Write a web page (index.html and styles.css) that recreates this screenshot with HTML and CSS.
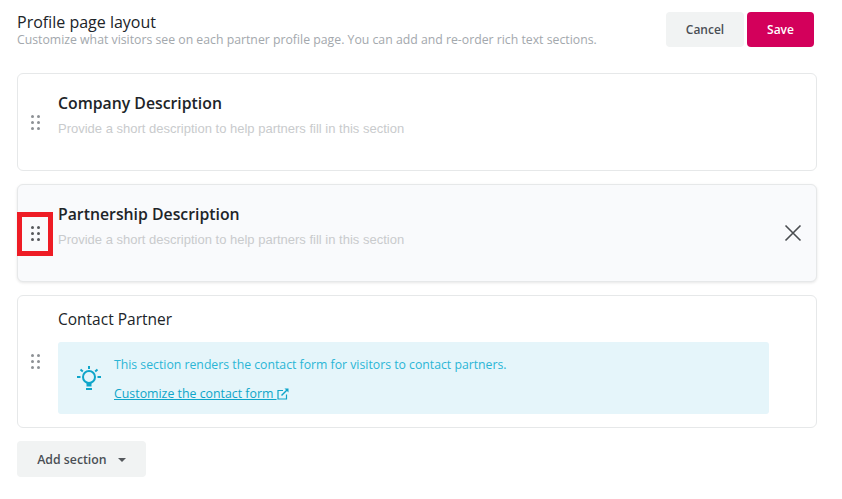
FILE: index.html
```html
<!DOCTYPE html>
<html lang="en">
<head>
  <meta charset="UTF-8">
  <title>Profile page layout</title>
  <link rel="stylesheet" href="styles.css">
</head>
<body>

<div class="page">
  <div class="page-header">
    <div class="page-title">
      <h1>Profile page layout</h1>
      <p>Customize what visitors see on each partner profile page. You can add and re-order rich text sections.</p>
    </div>
    <div class="actions">
      <button type="button" class="btn btn-cancel">Cancel</button>
      <button type="button" class="btn btn-save">Save</button>
    </div>
  </div>

  <div class="section">
    <span class="handle"><i></i><i></i><i></i><i></i><i></i><i></i></span>
    <div class="section-body">
      <h2>Company Description</h2>
      <p class="hint">Provide a short description to help partners fill in this section</p>
    </div>
  </div>

  <div class="section section-active">
    <span class="handle"><i></i><i></i><i></i><i></i><i></i><i></i></span>
    <div class="section-body">
      <h2>Partnership Description</h2>
      <p class="hint">Provide a short description to help partners fill in this section</p>
    </div>
    <svg class="close" width="18" height="18" viewBox="0 0 18 18"><path d="M1.5 1.5l15 15M16.5 1.5l-15 15" fill="none" stroke="#4a4d50" stroke-width="1.6"/></svg>
    <div class="highlight"></div>
  </div>

  <div class="section section-contact">
    <span class="handle"><i></i><i></i><i></i><i></i><i></i><i></i></span>
    <div class="section-body">
      <h3>Contact Partner</h3>
      <div class="notice">
        <svg class="bulb" width="26" height="26" viewBox="0 0 26 26" fill="none" stroke="#0ea5c9" stroke-width="2">
          <circle cx="13" cy="12" r="6"/>
          <path d="M10.500 18.500h5M10.500 20.500h5M10 24h6M13 1v3M1 12h3.500M21.500 12h3.500M4.500 4.500l2.300 2M21.500 4.500l-2.300 2"/>
        </svg>
        <div class="notice-text">
          <p>This section renders the contact form for visitors to contact partners.</p>
          <a href="#">Customize the contact form
            <svg width="12" height="12" viewBox="0 0 12 12" fill="none" stroke="#0ea5c9" stroke-width="1.2"><path d="M6 2.500H1v8.500h8.500V6.500"/><path d="M4.500 7.500L10 2" stroke-width="1.500"/><path d="M7.500 .5H11.500V4.500z" fill="#0ea5c9" stroke="none"/></svg>
          </a>
        </div>
      </div>
    </div>
  </div>

  <button type="button" class="btn btn-add">Add section <span class="caret"></span></button>
</div>

</body>
</html>
```

FILE: styles.css
```css
body {
    margin: 0;
    background-color: #fff;
    font-family: "Open Sans", "Noto Sans", Arial, sans-serif;
    color: #202428;
}

.page {
    width: 800px;
    padding: 12px 0 0 17px;
}

.page-header {
    display: flex;
    justify-content: space-between;
    height: 61px;
    padding-right: 3px;
}

h1 {
    margin: 0;
    font-size: 16px;
    font-weight: 400;
    line-height: 20px;
}

.page-title p {
    margin: 0;
    font-size: 12.280px;
    line-height: 16px;
    color: #a3a8ad;
}

.actions {
    display: flex;
    gap: 3px;
}

.btn {
    height: 35px;
    border: none;
    border-radius: 4px;
    font-family: inherit;
    font-size: 12px;
    font-weight: 600;
    cursor: pointer;
}

.btn-cancel {
    width: 78px;
    background-color: #f1f3f3;
    color: #4a4f55;
}

.btn-save {
    width: 67px;
    background-color: #d3005b;
    color: #fff;
}

.section {
    position: relative;
    display: flex;
    align-items: center;
    box-sizing: border-box;
    height: 98px;
    margin-bottom: 13px;
    border: 1px solid #e6e8e9;
    border-radius: 6px;
    background-color: #fff;
}

.section-active {
    background-color: #f9fafc;
    box-shadow: 0 1px 3px rgba(0, 0, 0, 0.1);
}

.section-contact {
    height: 133px;
}

.handle {
    display: grid;
    grid-template-columns: 3px 3px;
    gap: 3px;
    flex: none;
    width: 9px;
    margin-left: 13px;
}

.handle i {
    width: 3px;
    height: 3px;
    border-radius: 50%;
    background-color: #8d9195;
}

.section-active .handle i {
    background-color: #55585c;
}

.section-body {
    align-self: flex-start;
    flex: 1;
    margin-left: 18px;
    padding-top: 18px;
}

h2 {
    margin: 0;
    font-size: 15.800px;
    font-weight: 600;
    line-height: 22px;
}

.hint {
    margin: 5px 0 0;
    font-family: "Liberation Sans", Arial, sans-serif;
    font-size: 13px;
    line-height: 20px;
    color: #c9cbcd;
}

.close {
    position: absolute;
    right: 14px;
    top: 39px;
}

.highlight {
    position: absolute;
    left: -1px;
    top: 27px;
    box-sizing: border-box;
    width: 36px;
    height: 44px;
    border: 5px solid #ee1c25;
}

.section-contact .section-body {
    padding-top: 13px;
}

h3 {
    margin: 0 0 13px;
    font-size: 15.500px;
    font-weight: 400;
    line-height: 20px;
}

.notice {
    display: flex;
    align-items: center;
    box-sizing: border-box;
    width: 711px;
    height: 72px;
    padding-left: 18px;
    border-radius: 3px;
    background-color: #e5f5fa;
}

.notice-text {
    margin-left: 12px;
    padding-top: 1px;
    font-size: 12.250px;
    line-height: 17px;
    color: #2bb5d6;
}

.notice-text p {
    margin: 0 0 12px;
}

.notice-text a {
    font-size: 12.350px;
    color: #0ea5c9;
}

.notice-text svg {
    vertical-align: -2px;
}

.btn-add {
    width: 129px;
    height: 36px;
    font-size: 12.300px;
    background-color: #f1f3f3;
    color: #4a4f55;
}

.caret {
    display: inline-block;
    margin-left: 8px;
    border-top: 4px solid #55585c;
    border-left: 4px solid transparent;
    border-right: 4px solid transparent;
    vertical-align: 2px;
}
```
